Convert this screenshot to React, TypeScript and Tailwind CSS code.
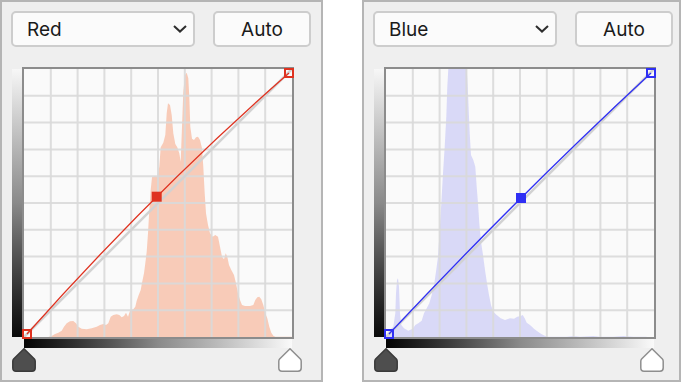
type Pt = [number, number]

// contour samples read off the reference, in its own pixel grid
const redHist: Pt[] = [
  [85, 831], [95, 828], [105, 822], [115, 818], [125, 812], [132, 800], [140, 790], [150, 784],
  [160, 783], [168, 790], [175, 800], [185, 806], [200, 808], [215, 805], [230, 800], [240, 795],
  [250, 792], [258, 795], [265, 790], [272, 770], [280, 765], [290, 763], [298, 765], [305, 772],
  [312, 768], [318, 758], [324, 770], [330, 752], [340, 748], [346, 740], [350, 722], [356, 705],
  [362, 690], [366, 668], [372, 640], [376, 610], [380, 575], [384, 520], [388, 450], [392, 390],
  [396, 352], [404, 348], [412, 350], [418, 320], [422, 262], [430, 248], [436, 225], [440, 160],
  [444, 130], [450, 135], [455, 165], [460, 220], [466, 252], [472, 262], [478, 280], [482, 305],
  [486, 200], [490, 95], [495, 45], [500, 38], [505, 55], [508, 110], [511, 200], [516, 236],
  [522, 240], [528, 232], [534, 230], [540, 240], [546, 265], [550, 320], [554, 400], [558, 460],
  [564, 495], [570, 520], [578, 530], [586, 525], [594, 530], [600, 560], [606, 590], [612, 598],
  [617, 580], [622, 590], [627, 615], [634, 630], [642, 645], [648, 670], [654, 700], [660, 720],
  [666, 735], [675, 738], [690, 738], [700, 735], [706, 720], [712, 712], [718, 710], [724, 718],
  [730, 735], [736, 760], [742, 775], [748, 800], [754, 818], [760, 827], [766, 830], [815, 830],
]

const blueHist: Pt[] = [
  [18, 831], [24, 815], [32, 808], [40, 800], [46, 760], [48, 700], [51, 660], [54, 655],
  [57, 680], [60, 760], [64, 795], [72, 805], [85, 812], [98, 806], [106, 795], [115, 790],
  [125, 782], [132, 760], [140, 745], [148, 730], [155, 705], [162, 675], [168, 635], [174, 590],
  [179, 510], [184, 430], [189, 340], [194, 260], [199, 170], [202, 80], [205, 27], [260, 27],
  [263, 80], [266, 150], [269, 220], [273, 285], [280, 300], [286, 320], [290, 380], [294, 430],
  [298, 490], [303, 545], [309, 585], [315, 630], [321, 670], [327, 705], [333, 735], [340, 755],
  [350, 765], [362, 775], [375, 780], [390, 775], [402, 776], [412, 770], [422, 768], [428, 765],
  [434, 775], [440, 788], [450, 795], [462, 806], [472, 814], [484, 822], [496, 828], [505, 830],
  [560, 830], [580, 828], [600, 830], [640, 828], [660, 830], [700, 830], [730, 828], [760, 830],
  [800, 830],
]

const SIZE = 268

function histPath(pts: Pt[], dx: number) {
  const xy = pts.map(([x, y]) => [x / 3 - dx, Math.max(0, y / 3 - 9)])
  return (
    `M${xy[0][0].toFixed(1)} ${SIZE} ` +
    xy.map(([x, y]) => `L${x.toFixed(1)} ${y.toFixed(1)}`).join(' ') +
    ` L${xy[xy.length - 1][0].toFixed(1)} ${SIZE} Z`
  )
}

interface CurveProps {
  color: string
  fill: string
  hist: Pt[]
  dx: number
  mid: Pt
}

function CurveGraph({ color, fill, hist, dx, mid }: CurveProps) {
  const p0: Pt = [3, 265]
  const p2: Pt = [265, 4]
  const c: Pt = [2 * mid[0] - (p0[0] + p2[0]) / 2, 2 * mid[1] - (p0[1] + p2[1]) / 2]
  const lines = Array.from({ length: 9 }, (_, i) => (i + 1) * (SIZE / 10))

  return (
    <svg width={SIZE} height={SIZE} viewBox={`0 0 ${SIZE} ${SIZE}`} className="block overflow-visible">
      <path d={histPath(hist, dx)} fill={fill} />
      {lines.map((p) => (
        <g key={p} stroke="#dadada" strokeWidth="2" opacity="0.9">
          <line x1={p} y1={0} x2={p} y2={SIZE} />
          <line x1={0} y1={p} x2={SIZE} y2={p} />
        </g>
      ))}
      <line x1={0} y1={SIZE} x2={SIZE} y2={0} stroke="#d2d2d2" strokeWidth="2.5" />
      <path
        d={`M${p0[0]} ${p0[1]} Q${c[0]} ${c[1]} ${p2[0]} ${p2[1]}`}
        fill="none"
        stroke={color}
        strokeWidth="1.3"
      />
      <rect x={p0[0] - 4} y={p0[1] - 4} width="8" height="8" fill="none" stroke={color} strokeWidth="2" />
      <rect x={p2[0] - 4} y={p2[1] - 4} width="8" height="8" fill="none" stroke={color} strokeWidth="2" />
      <rect x={mid[0] - 5} y={mid[1] - 5} width="10" height="10" fill={color} />
    </svg>
  )
}

function Thumb({ dark }: { dark?: boolean }) {
  return (
    <svg width="24" height="24" viewBox="0 0 24 24" className="block">
      <path
        d="M12 0.8 L22.4 11 Q23.2 11.9 23.2 13.2 V20 Q23.2 23.2 20 23.2 H4 Q0.8 23.2 0.8 20 V13.2 Q0.8 11.9 1.6 11 Z"
        fill={dark ? '#4e4e4e' : '#ffffff'}
        stroke={dark ? '#3a3a3a' : '#8e8e8e'}
        strokeWidth="1.5"
      />
    </svg>
  )
}

interface PanelProps {
  channel: string
  width: string
  color: string
  fill: string
  hist: Pt[]
  dx: number
  mid: Pt
}

function CurvesPanel({ channel, width, color, fill, hist, dx, mid }: PanelProps) {
  return (
    <div className={`h-[382px] ${width} shrink-0 border-2 border-[#b5b5b5] bg-[#efefef] pt-[9px] pl-[9px]`}>
      <div className="flex gap-[18px]">
        <div className="flex h-9 w-[184px] items-center justify-between rounded-[5px] border-2 border-[#cdcdcd] bg-[#fbfbfb] pr-[6px] pl-[14px]">
          <span className="text-[19px] leading-none text-[#1a1a1a]">{channel}</span>
          <svg width="14" height="8" viewBox="0 0 14 8">
            <path d="M1 1 L7 6.6 L13 1" fill="none" stroke="#2e2e2e" strokeWidth="2" />
          </svg>
        </div>
        <div className="flex h-9 w-[98px] items-center justify-center rounded-[5px] border-2 border-[#cdcdcd] bg-[#fbfbfb]">
          <span className="text-[19px] leading-none text-[#1a1a1a]">Auto</span>
        </div>
      </div>

      <div className="mt-5 flex items-start">
        <div className="mt-[2px] ml-px h-[268px] w-[10px] bg-linear-to-b from-[#f7f7f7] via-[#8a8a8a] to-[#0a0a0a]" />
        <div className="h-[272px] w-[272px] border-2 border-[#8c8c8c] bg-[#fafafa]">
          <CurveGraph color={color} fill={fill} hist={hist} dx={dx} mid={mid} />
        </div>
      </div>
      <div className="ml-[13px] h-[9px] w-[268px] bg-linear-to-r from-[#050505] via-[#8a8a8a] to-[#fafafa]" />
      <div className="ml-px flex w-[290px] justify-between">
        <Thumb dark />
        <Thumb />
      </div>
    </div>
  )
}

export default function App() {
  return (
    <div className="flex h-[382px] w-[684px] gap-[39px] overflow-hidden bg-white font-['Inter','Liberation_Sans',sans-serif]">
      <CurvesPanel
        channel="Red"
        width="w-[323px]"
        color="#df3220"
        fill="#f8cbb8"
        hist={redHist}
        dx={4}
        mid={[132.7, 127.7]}
      />
      <CurvesPanel
        channel="Blue"
        width="w-[319px]"
        color="#2f2ff4"
        fill="#d9d9f7"
        hist={blueHist}
        dx={6}
        mid={[135, 129]}
      />
    </div>
  )
}
